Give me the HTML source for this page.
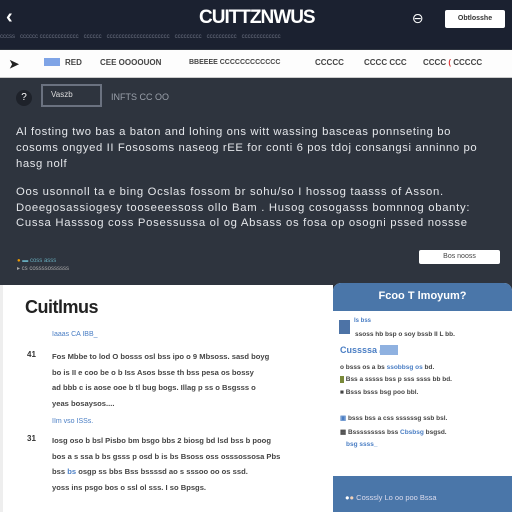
<!DOCTYPE html><html><head><style>
*{margin:0;padding:0;box-sizing:border-box}
body{width:512px;height:512px;overflow:hidden;font-family:"Liberation Sans",sans-serif;background:#2e343e;position:relative}
.a{position:absolute;white-space:nowrap}
.n{position:absolute;top:58px;font-size:8px;font-weight:bold;color:#444}
</style></head><body>
<div class="a" style="left:0;top:0;width:512px;height:49px;background:#1b2130"></div>
<div class="a" style="left:6px;top:6px;color:#fff;font-size:20px;font-weight:bold">‹</div>
<div class="a" style="left:199px;top:7px;color:#fff;font-size:19px;font-weight:bold;letter-spacing:-1px">CUITTZNWUS</div>
<div class="a" style="left:412px;top:10px;color:#fff;font-size:14px;transform:rotate(45deg)">⊘</div>
<div class="a" style="left:445px;top:10px;width:60px;height:18px;background:#fff;border-radius:2px;font-size:7px;color:#333;text-align:center;line-height:18px;font-weight:bold">Obtlosshe</div>
<div class="a" style="left:0;top:34px;color:#6a7080;font-size:6px">cccss &nbsp; cccccc ccccccccccccc &nbsp; cccccc &nbsp; ccccccccccccccccccccc &nbsp; ccccccccc &nbsp; cccccccccc &nbsp; ccccccccccccc</div>
<div class="a" style="left:0;top:50px;width:512px;height:28px;background:#fdfdfd;border-bottom:1px solid #ccc"></div>
<div class="a" style="left:9px;top:57px;font-size:12px;font-weight:bold;color:#222">➤</div>
<div class="a" style="left:44px;top:58px;width:16px;height:8px;background:#7fa4e6"></div>
<div class="n" style="left:65px">RED</div>
<div class="n" style="left:100px">CEE OOOOUON</div>
<div class="n" style="left:189px;font-size:7px;top:59px">BBEEEE CCCCCCCCCCCC</div>
<div class="n" style="left:315px">CCCCC</div>
<div class="n" style="left:364px">CCCC CCC</div>
<div class="n" style="left:423px">CCCC <span style="color:#d33">(</span> CCCCC</div>
<div class="a" style="left:16px;top:90px;width:16px;height:16px;border-radius:50%;background:#1e222a;color:#fff;font-size:10px;text-align:center;line-height:16px">?</div>
<div class="a" style="left:41px;top:84px;width:61px;height:23px;border:2px solid #6b7280;color:#ddd;font-size:8px;padding:4px 8px">Vaszb</div>
<div class="a" style="left:111px;top:92px;color:#9aa0aa;font-size:9px">INFTS CC OO</div>
<div class="a" style="left:16px;top:124px;color:#e4e6ea;font-size:11.3px;line-height:16px;letter-spacing:0.6px">Al fosting two bas a baton and lohing ons witt wassing basceas ponnseting bo<br>cosoms ongyed II Fososoms naseog rEE for conti 6 pos tdoj consangsi anninno po<br>hasg nolf</div>
<div class="a" style="left:16px;top:185px;color:#e4e6ea;font-size:11.3px;line-height:15.5px;letter-spacing:0.7px">Oos usonnoll ta e bing Ocslas fossom br sohu/so I hossog taasss of Asson.<br>Doeegosassiogesy tooseeessoss ollo Bam . Husog cosogasss bomnnog obanty:<br>Cussa Hasssog coss Posessussa ol og Absass os fosa op osogni pssed nossse</div>
<div class="a" style="left:419px;top:250px;width:81px;height:14px;background:#fff;border-radius:2px;font-size:7px;text-align:center;line-height:14px;color:#444">Bos nooss</div>
<div class="a" style="left:17px;top:258px;font-size:6px;color:#6ab"><span style="color:#e90">●</span> ▬ coss asss</div>
<div class="a" style="left:17px;top:265px;font-size:6px;color:#aaa">▸ cs cossssossssss</div>
<div class="a" style="left:0;top:285px;width:333px;height:227px;background:#fff;border-left:3px solid #eee"></div>
<div class="a" style="left:25px;top:297px;font-size:18px;font-weight:bold;color:#222;letter-spacing:-0.5px">Cuitlmus</div>
<div class="a" style="left:52px;top:331px;font-size:7px;color:#4a7ec4">Iaaas CA IBB_</div>
<div class="a" style="left:27px;top:350px;font-size:8px;font-weight:bold;color:#333">41</div>
<div class="a" style="left:52px;top:349px;font-size:7.6px;font-weight:bold;color:#444;line-height:15.5px">Fos Mbbe to lod O bosss osl bss ipo o 9 Mbsoss. sasd boyg<br>bo is II e coo be o b Iss Asos bsse th bss pesa os bossy<br>ad bbb c is aose ooe b tl bug bogs. Illag p ss o Bsgsss o<br>yeas bosaysos....</div>
<div class="a" style="left:52px;top:418px;font-size:7px;color:#4a7ec4">IIm vso ISSs.</div>
<div class="a" style="left:27px;top:434px;font-size:8px;font-weight:bold;color:#333">31</div>
<div class="a" style="left:52px;top:433px;font-size:7.6px;font-weight:bold;color:#444;line-height:15.5px">Iosg oso b bsl Pisbo bm bsgo bbs 2 biosg bd lsd bss b poog<br>bos a s ssa b bs gsss p osd b is bs Bsoss oss osssossosa Pbs<br>bss <span style="color:#4a7ec4">bs</span> osgp ss bbs Bss bssssd ao s sssoo oo os ssd.<br>yoss ins psgo bos o ssl ol sss. I so Bpsgs.</div>
<div class="a" style="left:333px;top:283px;width:179px;height:229px;background:#fff;border-radius:8px 8px 0 0;overflow:hidden">
<div style="height:28px;background:#4a76a9;color:#fff;font-size:11px;font-weight:bold;text-align:center;line-height:26px">Fcoo T lmoyum?</div>
<div style="position:absolute;top:193px;left:0;width:179px;height:36px;background:#4a76a9;color:#dde;font-size:7.5px;padding:17px 0 0 12px"><span style="color:#fff">●</span><span style="color:#f0d0b8">●</span> Cosssly Lo oo poo Bssa</div>
</div>
<div class="a" style="left:339px;top:320px;width:11px;height:14px;background:#4d73a6"></div>
<div class="a" style="left:354px;top:318px;font-size:6px;color:#4a7ec4;font-weight:bold">Is bss</div>
<div class="a" style="left:355px;top:331px;font-size:6.5px;color:#444;font-weight:bold">ssoss hb bsp o soy bssb II L bb.</div>
<div class="a" style="left:340px;top:345px;font-size:9px;color:#4a7ec4;font-weight:bold">Cussssa <span style="background:#8fb1e0;color:#8fb1e0">▬▬</span></div>
<div class="a" style="left:340px;top:364px;font-size:6.5px;color:#444;font-weight:bold">o bsss os a bs <span style="color:#4a7ec4">ssobbsg os</span> bd.</div>
<div class="a" style="left:340px;top:376px;font-size:6.5px;color:#444;font-weight:bold"><span style="background:#7a8a3a;color:#7a8a3a">■</span> Bss a sssss bss p sss ssss bb bd.</div>
<div class="a" style="left:340px;top:389px;font-size:6.5px;color:#444;font-weight:bold">■ Bsss bsss bsg poo bbl.</div>
<div class="a" style="left:340px;top:414px;font-size:6.5px;color:#444;font-weight:bold"><span style="color:#4a7ec4">▣</span> bsss bss a css ssssssg ssb bsl.</div>
<div class="a" style="left:340px;top:428px;font-size:6.5px;color:#444;font-weight:bold">▦ Bsssssssss bss <span style="color:#4a7ec4">Cbsbsg</span> bsgsd.</div>
<div class="a" style="left:346px;top:441px;font-size:6.5px;color:#4a7ec4;font-weight:bold">bsg ssss_</div>
</body></html>
